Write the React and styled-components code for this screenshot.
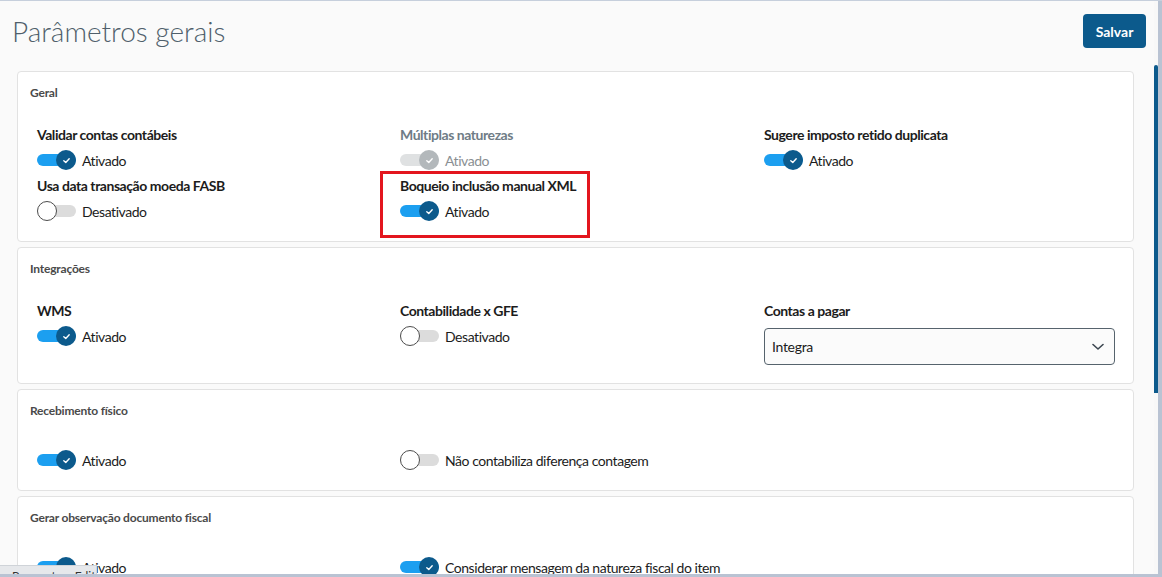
import React from 'react';
import styled, { createGlobalStyle } from 'styled-components';

const GlobalStyle = createGlobalStyle`
  html, body {
    margin: 0;
    padding: 0;
    background: #fafafa;
    font-family: Lato, "Open Sans", "Liberation Sans", sans-serif;
    color: #1c1c1c;
  }
`;

const Frame = styled.div`
  position: relative;
  display: flex;
  height: 577px;
  overflow: hidden;
  border-top: 1px solid #c6cfdc;
  box-sizing: border-box;
`;

const Main = styled.div`
  flex: 1;
  min-width: 0;
  display: flex;
  flex-direction: column;
`;

const ScrollRail = styled.div`
  width: 8px;
  flex-shrink: 0;
  background: linear-gradient(to right, #f8f8f8 4px, #b9c3d3 4px);
`;

const ScrollThumb = styled.div`
  width: 4px;
  height: 328px;
  margin-top: 64px;
  background: #0c5a8c;
  border-radius: 2px 2px 0 0;
`;

const Header = styled.div`
  display: flex;
  justify-content: space-between;
  align-items: center;
  padding: 13px 8px 0 12px;
  margin-bottom: 23px;
`;

const Title = styled.h1`
  margin: 0;
  font-size: 28px;
  font-weight: 300;
  color: #4f5f6b;
`;

const SaveButton = styled.button`
  height: 34px;
  width: 63px;
  border: none;
  border-radius: 4px;
  background: #0c5a8c;
  color: #fff;
  font-family: inherit;
  font-size: 14px;
  font-weight: 700;
  cursor: pointer;
`;

const Content = styled.div`
  display: flex;
  flex-direction: column;
  gap: 5px;
  padding: 0 20px 0 17px;
`;

const Card = styled.section`
  position: relative;
  background: #fff;
  border: 1px solid #e2e2e2;
  border-radius: 4px;
  padding: 13px 12px 18px;
`;

const CardTitle = styled.div`
  font-size: 12px;
  line-height: 16px;
  font-weight: 700;
  color: #4a4a4a;
  letter-spacing: -0.2px;
`;

const FieldGrid = styled.div`
  display: grid;
  grid-template-columns: 363px 364px 351px;
  row-gap: 4px;
  margin-top: 24px;
  padding-left: 7px;
`;

const Field = styled.div`
  display: flex;
  flex-direction: column;
`;

const Label = styled.div`
  font-size: 14px;
  line-height: 20px;
  height: ${p => (p.$empty ? '2px' : '20px')};
  font-weight: 700;
  letter-spacing: -0.45px;
  color: ${p => (p.$disabled ? '#6f7c86' : '#1c1c1c')};
  margin-bottom: ${p => (p.$select ? '7px' : '3px')};
  white-space: nowrap;
`;

const ToggleRow = styled.div`
  display: flex;
  align-items: center;
  gap: 6px;
  height: 24px;
`;

const Track = styled.div`
  width: 39px;
  height: 12px;
  border-radius: 6px;
  display: flex;
  align-items: center;
  justify-content: ${p => (p.$on ? 'flex-end' : 'flex-start')};
  background: ${p => (p.$disabled ? '#dfe1e2' : p.$on ? '#1c9ff0' : '#dcdcdc')};
  flex-shrink: 0;
`;

const Thumb = styled.div`
  width: 20px;
  height: 20px;
  box-sizing: border-box;
  border-radius: 50%;
  flex-shrink: 0;
  display: flex;
  align-items: center;
  justify-content: center;
  background: ${p => (p.$disabled ? '#b3b8bb' : p.$on ? '#0c5a8c' : '#fff')};
  border: ${p => (p.$on ? 'none' : '1px solid #4d4d4d')};
`;

const ToggleText = styled.span`
  font-size: 14px;
  letter-spacing: -0.45px;
  color: ${p => (p.$disabled ? '#8a8f93' : '#1c1c1c')};
  white-space: nowrap;
`;

const SelectBox = styled.div`
  height: 37px;
  box-sizing: border-box;
  border: 1px solid #56636d;
  border-radius: 4px;
  background: #fbfbfb;
  display: flex;
  align-items: center;
  justify-content: space-between;
  padding: 0 10px 0 7px;
  font-size: 14px;
  letter-spacing: -0.3px;
  color: #1c1c1c;
`;

const Highlight = styled.div`
  position: absolute;
  left: 362px;
  top: 99px;
  width: 210px;
  height: 67px;
  box-sizing: border-box;
  border: 3px solid #e3161e;
  pointer-events: none;
`;

const HScroll = styled.div`
  position: absolute;
  left: 0;
  right: 0;
  bottom: 0;
  height: 3px;
  background: #b9c3d3;
`;

const StatusTip = styled.div`
  position: absolute;
  left: 0;
  bottom: 3px;
  width: 97px;
  height: 9px;
  background: #e6e8eb;
  border-top: 1px solid #cfd3d8;
  border-right: 1px solid #cfd3d8;
  overflow: hidden;
  font-size: 12px;
  line-height: 20px;
  color: #333;
  padding-left: 12px;
  box-sizing: border-box;
  white-space: nowrap;
`;

const Check = () => (
  <svg width="9" height="9" viewBox="0 0 10 10">
    <path d="M2 5.2 L4.2 7.2 L8 3" fill="none" stroke="#fff" strokeWidth="1.5" strokeLinecap="round" strokeLinejoin="round" />
  </svg>
);

const Chevron = () => (
  <svg width="12" height="8" viewBox="0 0 12 8">
    <path d="M1 1.5 L6 6 L11 1.5" fill="none" stroke="#3c4650" strokeWidth="1.6" strokeLinecap="round" strokeLinejoin="round" />
  </svg>
);

const Toggle = ({ on, disabled, text }) => (
  <ToggleRow>
    <Track $on={on} $disabled={disabled}>
      <Thumb $on={on} $disabled={disabled}>{on && <Check />}</Thumb>
    </Track>
    <ToggleText $disabled={disabled}>{text || (on ? 'Ativado' : 'Desativado')}</ToggleText>
  </ToggleRow>
);

const SwitchField = ({ label, on, disabled, text }) => (
  <Field>
    <Label $disabled={disabled} $empty={!label}>{label}</Label>
    <Toggle on={on} disabled={disabled} text={text} />
  </Field>
);

const App = () => {
  return (
    <>
      <GlobalStyle />
      <Frame>
        <Main>
          <Header>
            <Title>Parâmetros gerais</Title>
            <SaveButton>Salvar</SaveButton>
          </Header>

          <Content>
            <Card>
              <CardTitle>Geral</CardTitle>
              <FieldGrid>
                <SwitchField label="Validar contas contábeis" on />
                <SwitchField label="Múltiplas naturezas" on disabled />
                <SwitchField label="Sugere imposto retido duplicata" on />
                <SwitchField label="Usa data transação moeda FASB" />
                <SwitchField label="Boqueio inclusão manual XML" on />
              </FieldGrid>
              <Highlight />
            </Card>

            <Card>
              <CardTitle>Integrações</CardTitle>
              <FieldGrid>
                <SwitchField label="WMS" on />
                <SwitchField label="Contabilidade x GFE" />
                <Field>
                  <Label $select>Contas a pagar</Label>
                  <SelectBox>
                    <span>Integra</span>
                    <Chevron />
                  </SelectBox>
                </Field>
              </FieldGrid>
            </Card>

            <Card>
              <CardTitle>Recebimento físico</CardTitle>
              <FieldGrid>
                <SwitchField on />
                <SwitchField text="Não contabiliza diferença contagem" />
              </FieldGrid>
            </Card>

            <Card>
              <CardTitle>Gerar observação documento fiscal</CardTitle>
              <FieldGrid>
                <SwitchField on />
                <SwitchField on text="Considerar mensagem da natureza fiscal do item" />
              </FieldGrid>
            </Card>
          </Content>
        </Main>

        <ScrollRail>
          <ScrollThumb />
        </ScrollRail>

        <StatusTip>Parametros Edit</StatusTip>
        <HScroll />
      </Frame>
    </>
  );
};

export default App;
